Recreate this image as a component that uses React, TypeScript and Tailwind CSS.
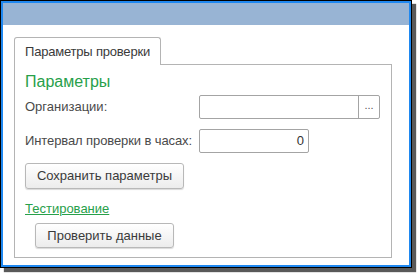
export default function App() {
  const font = { fontFamily: '"Liberation Sans", Arial, sans-serif' }
  return (
    <div className="h-[274px] w-[417px] bg-white" style={font}>
      <div className="h-[268px] w-[412px] border border-black shadow-[4px_4px_1px_rgba(0,0,0,0.65)]">
        <div className="flex h-full flex-col border-2 border-[#1f88f0] bg-white">
          <div className="h-[22px] bg-[#98b4d4]" />
          <div className="pl-[11px] pt-[12px]">
            <div className="relative z-10 -mb-px flex h-[28px] w-[147px] items-center rounded-t-[3px] border border-b-0 border-[#b4b4b4] bg-white pl-[10px] text-[13px] tracking-[-0.2px] text-[#3a3a3a]">
              Параметры проверки
            </div>
            <div className="flex h-[194px] w-[378px] flex-col border border-[#b4b4b4] pl-[10px] pt-[6px]">
              <div className="text-[16px] leading-[22px] text-[#28a04a]">Параметры</div>
              <div className="mt-[2px] flex h-[24px] items-center">
                <div className="w-[174px] text-[13px] text-[#4a4a4a]">Организации:</div>
                <div className="flex h-[24px] w-[181px] rounded-[2px] border border-[#a4a4a4]">
                  <div className="flex-1" />
                  <div className="flex w-[21px] items-center justify-center border-l border-[#a4a4a4] pb-[3px] text-[11px] text-[#555]">...</div>
                </div>
              </div>
              <div className="mt-[10px] flex h-[24px] items-center">
                <div className="w-[174px] whitespace-nowrap text-[13px] tracking-[-0.1px] text-[#4a4a4a]">Интервал проверки в часах:</div>
                <div className="flex h-[24px] w-[110px] items-center justify-end rounded-[2px] border border-[#a4a4a4] pr-[4px] text-[13px] text-[#333]">0</div>
              </div>
              <button className="mt-[10px] h-[26px] w-[159px] rounded-[3px] border border-[#b8b8b8] bg-gradient-to-b from-white to-[#ececec] text-[13px] text-[#3a3a3a] shadow-[0_1px_1px_rgba(0,0,0,0.15)]">
                Сохранить параметры
              </button>
              <div className="mt-[11px] text-[13px] leading-[18px]">
                <span className="text-[#28a04a] underline underline-offset-1">Тестирование</span>
              </div>
              <button className="ml-[10px] mt-[5px] h-[25px] w-[139px] rounded-[3px] border border-[#b8b8b8] bg-gradient-to-b from-white to-[#ececec] text-[13px] text-[#3a3a3a] shadow-[0_1px_1px_rgba(0,0,0,0.15)]">
                Проверить данные
              </button>
            </div>
          </div>
        </div>
      </div>
    </div>
  )
}
